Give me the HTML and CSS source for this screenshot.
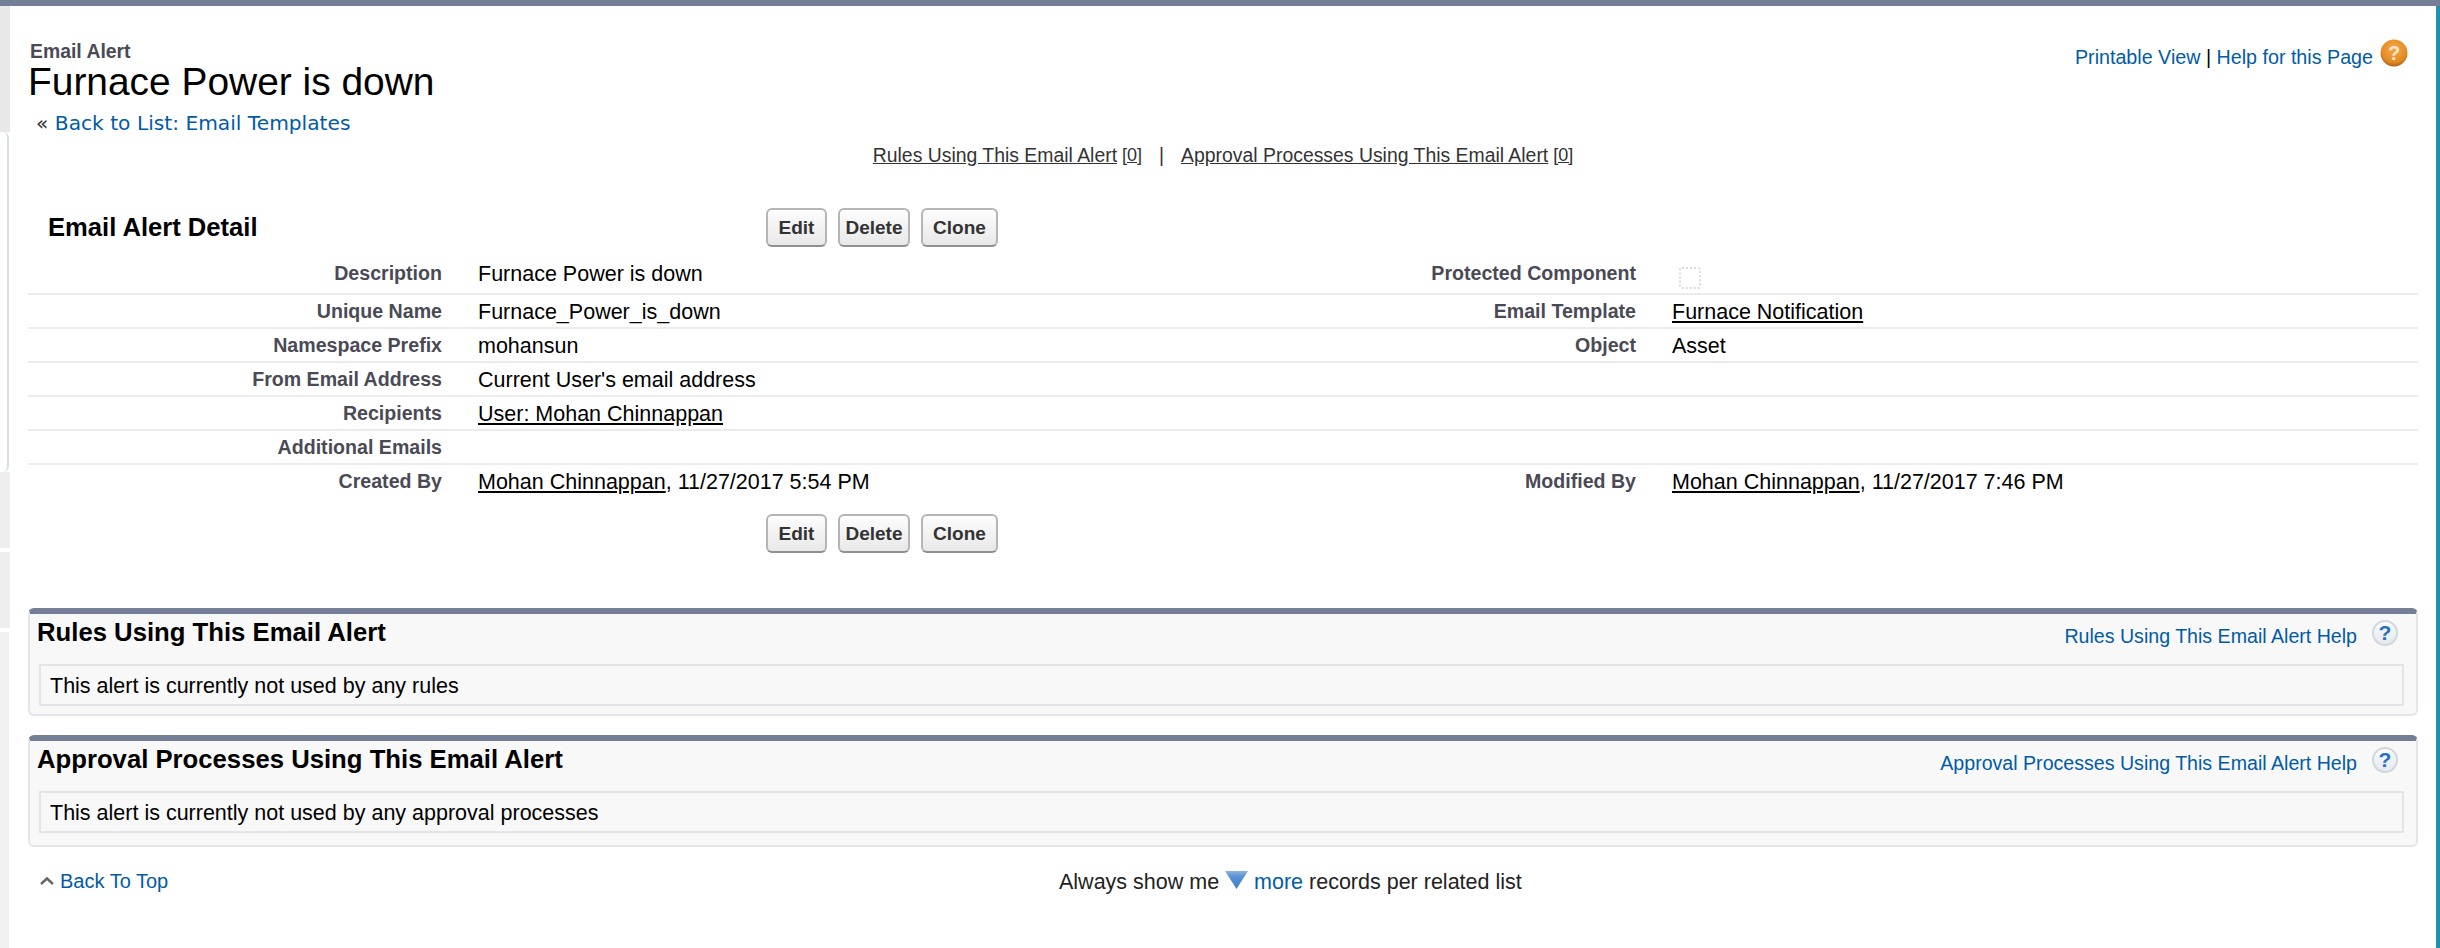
FILE: index.html
```html
<!DOCTYPE html>
<html lang="en">
<head>
    <meta charset="UTF-8">
    <meta name="viewport" content="width=device-width, initial-scale=1.0">
    <title>Email Alert: Furnace Power is down</title>
    <link rel="stylesheet" href="styles.css">
</head>
<body>
    <div class="shell">
        <!-- collapsed sidebar on the left edge -->
        <aside class="sidebar">
            <div class="side-top"></div>
            <div class="side-panel"></div>
            <div class="side-block"></div>
            <div class="side-block"></div>
            <div class="side-rest"></div>
        </aside>

        <main class="page">
            <header class="page-head">
                <div>
                    <div class="page-type">Email Alert</div>
                    <h1 class="page-title">Furnace Power is down</h1>
                </div>
                <div class="page-links">
                    <div class="page-links-text"><a href="#">Printable View</a> | <a href="#">Help for this Page</a></div>
                    <svg class="help-orange" width="28" height="28" viewBox="0 0 28 28">
                        <defs>
                            <radialGradient id="orangeBall" cx="50%" cy="35%" r="65%">
                                <stop offset="0" stop-color="#f4a94a"/>
                                <stop offset="0.75" stop-color="#e58a22"/>
                                <stop offset="1" stop-color="#a9631c"/>
                            </radialGradient>
                        </defs>
                        <circle cx="14" cy="14" r="13.5" fill="url(#orangeBall)"/>
                        <text x="14" y="21" class="help-mark help-mark-light">?</text>
                    </svg>
                </div>
            </header>

            <div class="back-list">&laquo; <a href="#">Back to List: Email Templates</a></div>

            <nav class="related-links">
                <a href="#">Rules Using This Email Alert</a> <span class="count">[0]</span>
                <span class="pipe">|</span>
                <a href="#">Approval Processes Using This Email Alert</a> <span class="count">[0]</span>
            </nav>

            <section class="detail">
                <div class="detail-head">
                    <h2 class="detail-title">Email Alert Detail</h2>
                    <div class="buttons">
                        <button type="button" class="btn btn-edit">Edit</button>
                        <button type="button" class="btn btn-delete">Delete</button>
                        <button type="button" class="btn btn-clone">Clone</button>
                    </div>
                </div>

                <div class="row row-first">
                    <div class="label">Description</div>
                    <div class="value">Furnace Power is down</div>
                    <div class="label label-right">Protected Component</div>
                    <div class="value"><span class="checkbox"></span></div>
                </div>
                <div class="row">
                    <div class="label">Unique Name</div>
                    <div class="value">Furnace_Power_is_down</div>
                    <div class="label label-right">Email Template</div>
                    <div class="value"><a href="#">Furnace Notification</a></div>
                </div>
                <div class="row">
                    <div class="label">Namespace Prefix</div>
                    <div class="value">mohansun</div>
                    <div class="label label-right">Object</div>
                    <div class="value">Asset</div>
                </div>
                <div class="row">
                    <div class="label">From Email Address</div>
                    <div class="value">Current User's email address</div>
                    <div class="label label-right"></div>
                    <div class="value"></div>
                </div>
                <div class="row">
                    <div class="label">Recipients</div>
                    <div class="value"><a href="#">User: Mohan Chinnappan</a></div>
                    <div class="label label-right"></div>
                    <div class="value"></div>
                </div>
                <div class="row">
                    <div class="label">Additional Emails</div>
                    <div class="value"></div>
                    <div class="label label-right"></div>
                    <div class="value"></div>
                </div>
                <div class="row row-last">
                    <div class="label">Created By</div>
                    <div class="value"><a href="#">Mohan Chinnappan</a>, 11/27/2017 5:54 PM</div>
                    <div class="label label-right">Modified By</div>
                    <div class="value"><a href="#">Mohan Chinnappan</a>, 11/27/2017 7:46 PM</div>
                </div>

                <div class="buttons buttons-bottom">
                    <button type="button" class="btn btn-edit">Edit</button>
                    <button type="button" class="btn btn-delete">Delete</button>
                    <button type="button" class="btn btn-clone">Clone</button>
                </div>
            </section>

            <section class="related">
                <div class="related-head">
                    <h3 class="related-title">Rules Using This Email Alert</h3>
                    <div class="related-help">
                        <a href="#">Rules Using This Email Alert Help</a>
                        <svg class="help-blue" width="26" height="26" viewBox="0 0 26 26">
                            <defs>
                                <linearGradient id="blueBall" x1="0" y1="0" x2="0" y2="1">
                                    <stop offset="0" stop-color="#fcfdfe"/>
                                    <stop offset="1" stop-color="#e2e8ee"/>
                                </linearGradient>
                            </defs>
                            <circle cx="13" cy="13" r="12" fill="url(#blueBall)" stroke="#d3d6da" stroke-width="2"/>
                            <text x="13" y="20" class="help-mark help-mark-blue">?</text>
                        </svg>
                    </div>
                </div>
                <div class="related-body">This alert is currently not used by any rules</div>
            </section>

            <section class="related related-second">
                <div class="related-head">
                    <h3 class="related-title">Approval Processes Using This Email Alert</h3>
                    <div class="related-help">
                        <a href="#">Approval Processes Using This Email Alert Help</a>
                        <svg class="help-blue" width="26" height="26" viewBox="0 0 26 26">
                            <circle cx="13" cy="13" r="12" fill="url(#blueBall)" stroke="#d3d6da" stroke-width="2"/>
                            <text x="13" y="20" class="help-mark help-mark-blue">?</text>
                        </svg>
                    </div>
                </div>
                <div class="related-body">This alert is currently not used by any approval processes</div>
            </section>

            <footer class="page-foot">
                <div class="back-top">
                    <svg width="14" height="10" viewBox="0 0 14 10">
                        <path d="M1 8 L7 2.5 L13 8" fill="none" stroke="#666" stroke-width="2.4"/>
                    </svg>
                    <a href="#">Back To Top</a>
                </div>
                <div class="show-more">
                    Always show me
                    <svg class="more-arrow" width="23" height="18" viewBox="0 0 23 18">
                        <defs>
                            <linearGradient id="moreFill" x1="0" y1="0" x2="0" y2="1">
                                <stop offset="0" stop-color="#8fb3dc"/>
                                <stop offset="0.3" stop-color="#5b93d6"/>
                                <stop offset="1" stop-color="#3f7cc8"/>
                            </linearGradient>
                        </defs>
                        <path d="M0 0 H23 L11.5 18 Z" fill="url(#moreFill)"/>
                    </svg>
                    <a href="#">more</a> records per related list
                </div>
            </footer>
        </main>

        <div class="right-edge"></div>
    </div>
</body>
</html>
```

FILE: styles.css
```css
/* General page styling */
html, body {
    margin: 0;
    padding: 0;
    height: 100%;
    overflow: hidden;
}

body {
    font-family: "Liberation Sans", Arial, sans-serif;
    background-color: #fff;
    color: #000;
}

a {
    color: #015ba7;
    text-decoration: none;
}

.shell {
    display: flex;
    height: 100vh;
    box-sizing: border-box;
    border-top: 6px solid #747e96;
}

/* Left sidebar strip */
.sidebar {
    display: flex;
    flex-direction: column;
    width: 10px;
    flex-shrink: 0;
}

.side-top {
    height: 126px;
    background-color: #e8e8e8;
}

.side-panel {
    height: 340px;
    width: 9px;
    box-sizing: border-box;
    background-color: #fff;
    border-right: 2px solid #d9dfe8;
    border-radius: 0 6px 6px 0;
}

.side-block {
    height: 76px;
    margin-bottom: 4px;
    background-color: #eeeeee;
}

.side-rest {
    flex: 1;
    width: 9px;
    background-color: #f0f0f0;
}

.right-edge {
    width: 4px;
    flex-shrink: 0;
    background-color: #1f8fb3;
}

.page {
    flex: 1;
    min-width: 0;
    padding: 34px 18px 0;
}

/* Page heading */
.page-head {
    display: flex;
    justify-content: space-between;
}

.page-type {
    margin-left: 2px;
    font-size: 19.4px;
    font-weight: bold;
    line-height: 22px;
    color: #4a4a56;
}

.page-title {
    margin: 0;
    font-size: 38.9px;
    font-weight: normal;
    line-height: 40px;
}

.page-links {
    display: flex;
    align-items: flex-start;
    gap: 7px;
    padding-right: 10px;
    font-size: 19.7px;
    line-height: 24px;
}

.page-links-text {
    margin-top: 5px;
}

.help-orange {
    position: relative;
    top: -1px;
}

.help-mark {
    font-family: "Liberation Sans", Arial, sans-serif;
    font-weight: bold;
    text-anchor: middle;
}

.help-mark-light {
    font-size: 20px;
    fill: #fbe6c8;
}

.help-mark-blue {
    font-size: 21px;
    fill: #2a6fc0;
}

.back-list {
    margin: 9px 0 0 8px;
    font-family: "DejaVu Sans", Verdana, sans-serif;
    font-size: 20.2px;
    line-height: 24px;
    color: #333;
}

.related-links {
    display: flex;
    justify-content: center;
    gap: 5px;
    margin: 8px 0 0;
    font-size: 19.4px;
    line-height: 24px;
    color: #333;
}

.related-links a {
    color: #333;
    text-decoration: underline;
}

.related-links .count {
    font-size: 18px;
    text-decoration: underline;
}

.related-links .pipe {
    margin: 0 12px;
}

/* Detail block */
.detail {
    margin-top: 41px;
}

.detail-head {
    display: flex;
    height: 39px;
}

.detail-title {
    width: 718px;
    margin: 0;
    padding-left: 20px;
    font-size: 25.6px;
    line-height: 38px;
}

.buttons {
    display: flex;
    gap: 11px;
}

.buttons-bottom {
    margin: 15px 0 0 738px;
}

.btn {
    height: 39px;
    padding: 0;
    border: 2px solid #b5b5b5;
    border-bottom-color: #8f8f8f;
    border-radius: 6px;
    background: linear-gradient(#fdfdfd, #e8e8e8);
    font-family: "Liberation Sans", Arial, sans-serif;
    font-size: 19px;
    font-weight: bold;
    color: #333;
}

.btn-edit {
    width: 61px;
}

.btn-delete {
    width: 72px;
}

.btn-clone {
    width: 77px;
}

.row {
    display: grid;
    grid-template-columns: 450px 522px 672px 1fr;
    box-sizing: border-box;
    height: 34px;
    padding-top: 5px;
    border-bottom: 2px solid #ececec;
    font-size: 21.5px;
    line-height: 24px;
}

.row-first {
    height: 37px;
    margin-top: 11px;
    padding-top: 4px;
}

.row-last {
    border-bottom: none;
}

.label {
    padding-right: 36px;
    font-size: 19.6px;
    font-weight: bold;
    line-height: 22px;
    text-align: right;
    color: #4a4a56;
}

.value a {
    color: #000;
    text-decoration: underline;
}

.checkbox {
    display: block;
    box-sizing: border-box;
    width: 22px;
    height: 22px;
    margin: 5px 0 0 7px;
    border: 2px dotted #dcdcdc;
    border-radius: 3px;
}

/* Related lists */
.related {
    box-sizing: border-box;
    margin-top: 55px;
    border: 2px solid #e3e5e8;
    border-top: 6px solid #747e96;
    border-radius: 6px;
    background-color: #f8f8f8;
}

.related-second {
    margin-top: 19px;
}

.related-head {
    display: flex;
    justify-content: space-between;
    height: 50px;
}

.related-title {
    margin: 3px 0 0 7px;
    font-size: 25.7px;
    line-height: 30px;
}

.related-help {
    display: flex;
    align-items: flex-start;
    gap: 15px;
    padding: 6px 18px 0 0;
    font-size: 19.6px;
    line-height: 22px;
}

.related-help a {
    margin-top: 5px;
}

.related-body {
    box-sizing: border-box;
    height: 42px;
    margin: 0 12px 8px 9px;
    padding: 8px 0 0 9px;
    border: 2px solid #e3e5e8;
    font-size: 21.5px;
    line-height: 24px;
}

.related-second .related-body {
    margin-bottom: 12px;
}

/* Footer row */
.page-foot {
    display: flex;
    align-items: center;
    height: 26px;
    margin-top: 22px;
    padding-left: 12px;
}

.back-top {
    display: flex;
    align-items: center;
    gap: 6px;
    width: 1019px;
    padding-bottom: 2px;
    font-size: 20px;
}

.show-more {
    font-size: 21.5px;
    line-height: 26px;
    color: #222;
    white-space: nowrap;
}
```
